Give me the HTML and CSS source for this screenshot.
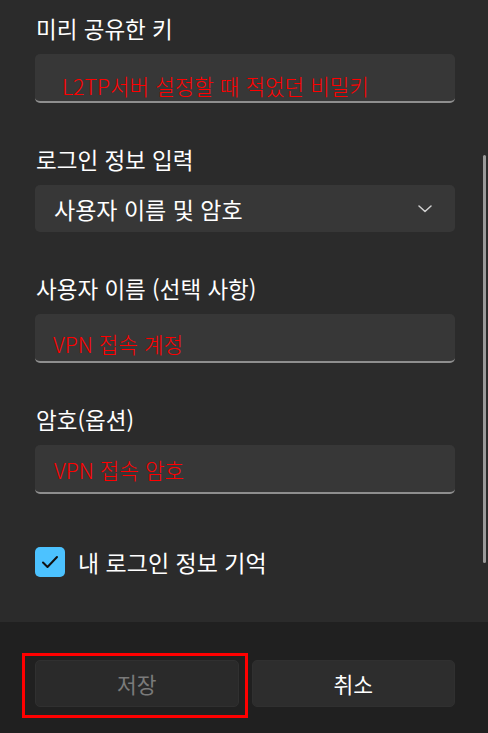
FILE: index.html
```html
<!DOCTYPE html>
<html lang="ko">
<head>
<meta charset="utf-8">
<link rel="stylesheet" href="styles.css">
</head>
<body>
<div class="dialog">
  <div class="content">
    <div class="field">
      <div class="label">미리 공유한 키</div>
      <div class="input pad-a"><span class="note">L2TP서버 설정할 때 적었던 비밀키</span></div>
    </div>
    <div class="field">
      <div class="label">로그인 정보 입력</div>
      <div class="select">
        <span class="select-text">사용자 이름 및 암호</span>
        <svg class="chevron" width="14" height="8" viewBox="0 0 14 8"><path d="M1 1 L7 6.5 L13 1" fill="none" stroke="#d0d0d0" stroke-width="1.5" stroke-linecap="round" stroke-linejoin="round"/></svg>
      </div>
    </div>
    <div class="field">
      <div class="label">사용자 이름 (선택 사항)</div>
      <div class="input pad-b"><span class="note">VPN 접속 계정</span></div>
    </div>
    <div class="field">
      <div class="label">암호(옵션)</div>
      <div class="input pad-c"><span class="note">VPN 접속 암호</span></div>
    </div>
    <div class="check-row">
      <span class="checkbox">
        <svg width="18" height="14" viewBox="0 0 18 14"><path d="M2 7.5 L6.5 12 L16 2" fill="none" stroke="#111" stroke-width="2" stroke-linecap="round" stroke-linejoin="round"/></svg>
      </span>
      <span class="check-label">내 로그인 정보 기억</span>
    </div>
    <div class="scrollbar"></div>
  </div>
  <div class="footer">
    <div class="btn btn-save">저장<span class="highlight"></span></div>
    <div class="btn btn-cancel">취소</div>
  </div>
</div>
</body>
</html>
```
FILE: styles.css
```css
* { box-sizing: border-box; }
html, body {
  margin: 0;
  padding: 0;
  background: #2b2b2b;
  font-family: "Noto Sans CJK KR", "Noto Sans", sans-serif;
  color: #ffffff;
}
.dialog {
  width: 488px;
  height: 733px;
  display: flex;
  flex-direction: column;
}
.content {
  position: relative;
  height: 622px;
  padding: 14px 33px 0 35px;
  display: flex;
  flex-direction: column;
  gap: 42px;
}
.field {
  display: flex;
  flex-direction: column;
  gap: 12px;
}
.label {
  font-size: 22.5px;
  font-weight: 400;
  line-height: 28px;
  color: #ffffff;
  padding-left: 1px;
}
.input {
  height: 49px;
  background: #373737;
  border-radius: 5px;
  border-bottom: 2px solid #8e8e8e;
  display: flex;
  align-items: flex-start;
}
.pad-a { padding: 18px 0 0 27px; }
.pad-b { padding: 16px 0 0 18px; }
.pad-c { padding: 11px 0 0 19px; }
.note {
  font-size: 21.3px;
  font-weight: 300;
  line-height: 28px;
  color: #ff0000;
}
.select {
  height: 47px;
  background: #373737;
  border-radius: 5px;
  display: flex;
  align-items: center;
  justify-content: space-between;
  padding: 0 23px 0 19px;
}
.select-text {
  font-size: 23px;
  font-weight: 400;
  line-height: 28px;
  color: #ffffff;
}
.check-row {
  display: flex;
  align-items: center;
  gap: 13px;
  margin-top: 11px;
}
.checkbox {
  width: 30px;
  height: 30px;
  border-radius: 5px;
  background: #4cc2ff;
  display: flex;
  align-items: center;
  justify-content: center;
}
.check-label {
  font-size: 23px;
  font-weight: 400;
  line-height: 28px;
  color: #ffffff;
}
.scrollbar {
  position: absolute;
  right: 2px;
  top: 155px;
  width: 3px;
  height: 408px;
  border-radius: 2px;
  background: #9a9a9a;
}
.footer {
  flex: 1;
  background: #202020;
  padding: 38px 33px 0 35px;
  display: grid;
  grid-template-columns: 1fr 1fr;
  column-gap: 13px;
  align-content: start;
}
.btn {
  position: relative;
  height: 47px;
  border-radius: 5px;
  display: flex;
  align-items: center;
  justify-content: center;
  font-size: 21.5px;
  font-weight: 400;
}
.btn-save {
  background: #2a2a2a;
  border: 1px solid #303030;
  color: #7a7a7a;
}
.btn-cancel {
  background: #2d2d2d;
  border: 1px solid #303030;
  color: #ffffff;
}
.highlight {
  position: absolute;
  left: -14px;
  top: -8px;
  width: 226px;
  height: 65px;
  border: 3px solid #ff0000;
}
```
